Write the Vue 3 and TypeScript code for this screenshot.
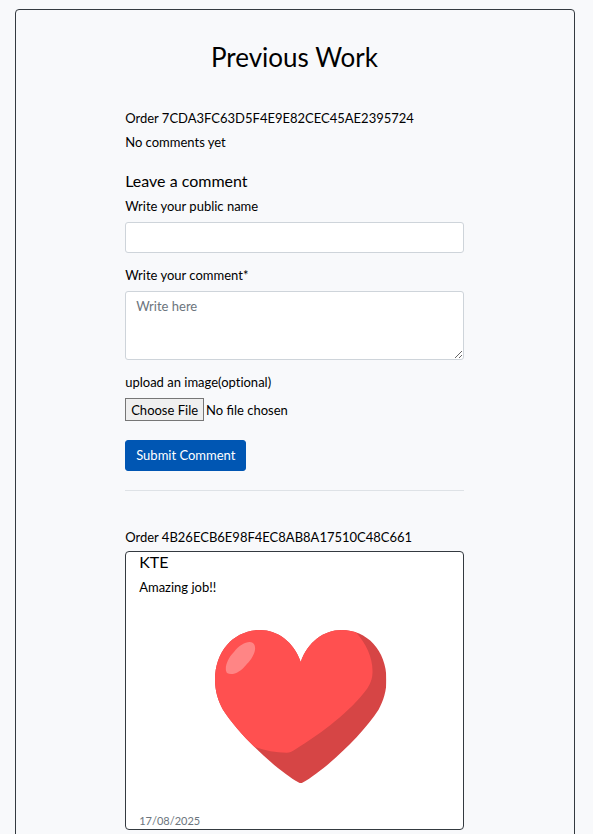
<script setup lang="ts">
import { ref } from 'vue'

interface OrderComment {
  name: string
  text: string
  date: string
}

const firstOrder = '7CDA3FC63D5F4E9E82CEC45AE2395724'
const secondOrder = '4B26ECB6E98F4EC8AB8A17510C48C661'
const comments: OrderComment[] = [{ name: 'KTE', text: 'Amazing job!!', date: '17/08/2025' }]
const publicName = ref('')
const message = ref('')
</script>

<template>
  <main class="panel">
    <h1 class="title">Previous Work</h1>
    <div class="column">
      <section class="order">
        <p class="line">Order {{ firstOrder }}</p>
        <p class="line">No comments yet</p>
        <form class="form" @submit.prevent>
          <h2 class="heading">Leave a comment</h2>
          <label class="label" for="public-name">Write your public name</label>
          <input id="public-name" v-model="publicName" class="control" type="text" />
          <label class="label" for="message">Write your comment*</label>
          <textarea id="message" v-model="message" class="control area" rows="3" placeholder="Write here"></textarea>
          <label class="label" for="image">upload an image(optional)</label>
          <input id="image" class="file" type="file" accept="image/*" />
          <button class="submit" type="submit">Submit Comment</button>
        </form>
      </section>
      <hr class="divider" />
      <section class="order">
        <p class="line">Order {{ secondOrder }}</p>
        <article v-for="comment in comments" :key="comment.name" class="card">
          <h2 class="heading">{{ comment.name }}</h2>
          <p class="line">{{ comment.text }}</p>
          <svg class="picture" viewBox="0 0 172 154" role="img" aria-label="Red heart">
            <defs>
              <clipPath id="heart-shape">
                <path d="M86 32C79 12 63 0 45 0C20 0 0 20 0 50C0 61 3 71 8 80C24 105 61 140 84 153Q86 154 88 153C111 140 148 105 164 80C169 71 172 61 172 50C172 20 152 0 127 0C109 0 93 12 86 32Z" />
              </clipPath>
            </defs>
            <g clip-path="url(#heart-shape)">
              <rect width="172" height="154" fill="#d64545" />
              <path d="M-5-5H137L142 3C151 13 158 27 158 41C158 49 156 54 151 61C137 80 107 104 80 120C77 122 75 123 72 123C61 123 50 121 39 117L-5 120Z" fill="#ff5050" />
            </g>
            <path d="M38 13C43 17 39 27 32 34C25 43 17 46 12 43C9 39 12 29 19 22C25 14 34 10 38 13Z" fill="#ff8585" />
          </svg>
          <time class="date" datetime="2025-08-17">{{ comment.date }}</time>
        </article>
      </section>
    </div>
  </main>
</template>

<style>
body {
  background: #f8f9fb;
}
</style>

<style scoped>
.panel {
  margin: 9px 18px 0 15px;
  padding: 31px 17px 24px 16px;
  border: 1px solid #343a40;
  border-radius: 4px;
  box-sizing: border-box;
  font: 13px/20px Lato, sans-serif;
  color: #000;
}
.title {
  margin: 0 0 35px;
  font-size: 26px;
  font-weight: 400;
  line-height: 32px;
  text-align: center;
}
.column {
  width: 64.5%;
  margin: 0 auto;
}
.line {
  margin: 0 0 4px;
}
.heading {
  margin: 0 0 5px;
  font-size: 16px;
  font-weight: 400;
  line-height: 20px;
}
.form {
  display: flex;
  flex-direction: column;
  align-items: flex-start;
  padding-top: 15px;
}
.label {
  margin-bottom: 6px;
  font-variant-ligatures: no-common-ligatures;
}
.control {
  box-sizing: border-box;
  width: 100%;
  height: 31px;
  margin: 0 0 12px;
  padding: 4px 10px;
  border: 1px solid #ced4da;
  border-radius: 3px;
  background: #fff;
  font: inherit;
  color: #495057;
}
.area {
  height: 69px;
  resize: vertical;
}
.area::placeholder {
  color: #6c757d;
}
.file {
  width: 100%;
  height: 23px;
  margin: 0 0 19px;
  font: inherit;
  line-height: 22px;
  color: #000;
}
.file::file-selector-button {
  box-sizing: border-box;
  height: 23px;
  margin: 0 2px 0 0;
  padding: 0 5px;
  border: 1px solid #767676;
  border-radius: 0;
  background: #efefef;
  font: inherit;
  line-height: 20px;
  color: #000;
}
.submit {
  padding: 4px 10px;
  border: 1px solid #0056b3;
  border-radius: 3px;
  background: #0056b3;
  font: inherit;
  line-height: 21px;
  color: #fff;
}
.divider {
  margin: 19px 0 36px;
  border: 0;
  border-top: 1px solid #dee2e6;
}
.card {
  display: flex;
  flex-direction: column;
  padding: 0 0 0 13px;
  border: 1px solid #343a40;
  border-radius: 4px;
  background: #fff;
}
.picture {
  width: 53%;
  margin: 29px auto;
}
.date {
  font-size: 11px;
  line-height: 16px;
  color: #6c757d;
}
</style>
